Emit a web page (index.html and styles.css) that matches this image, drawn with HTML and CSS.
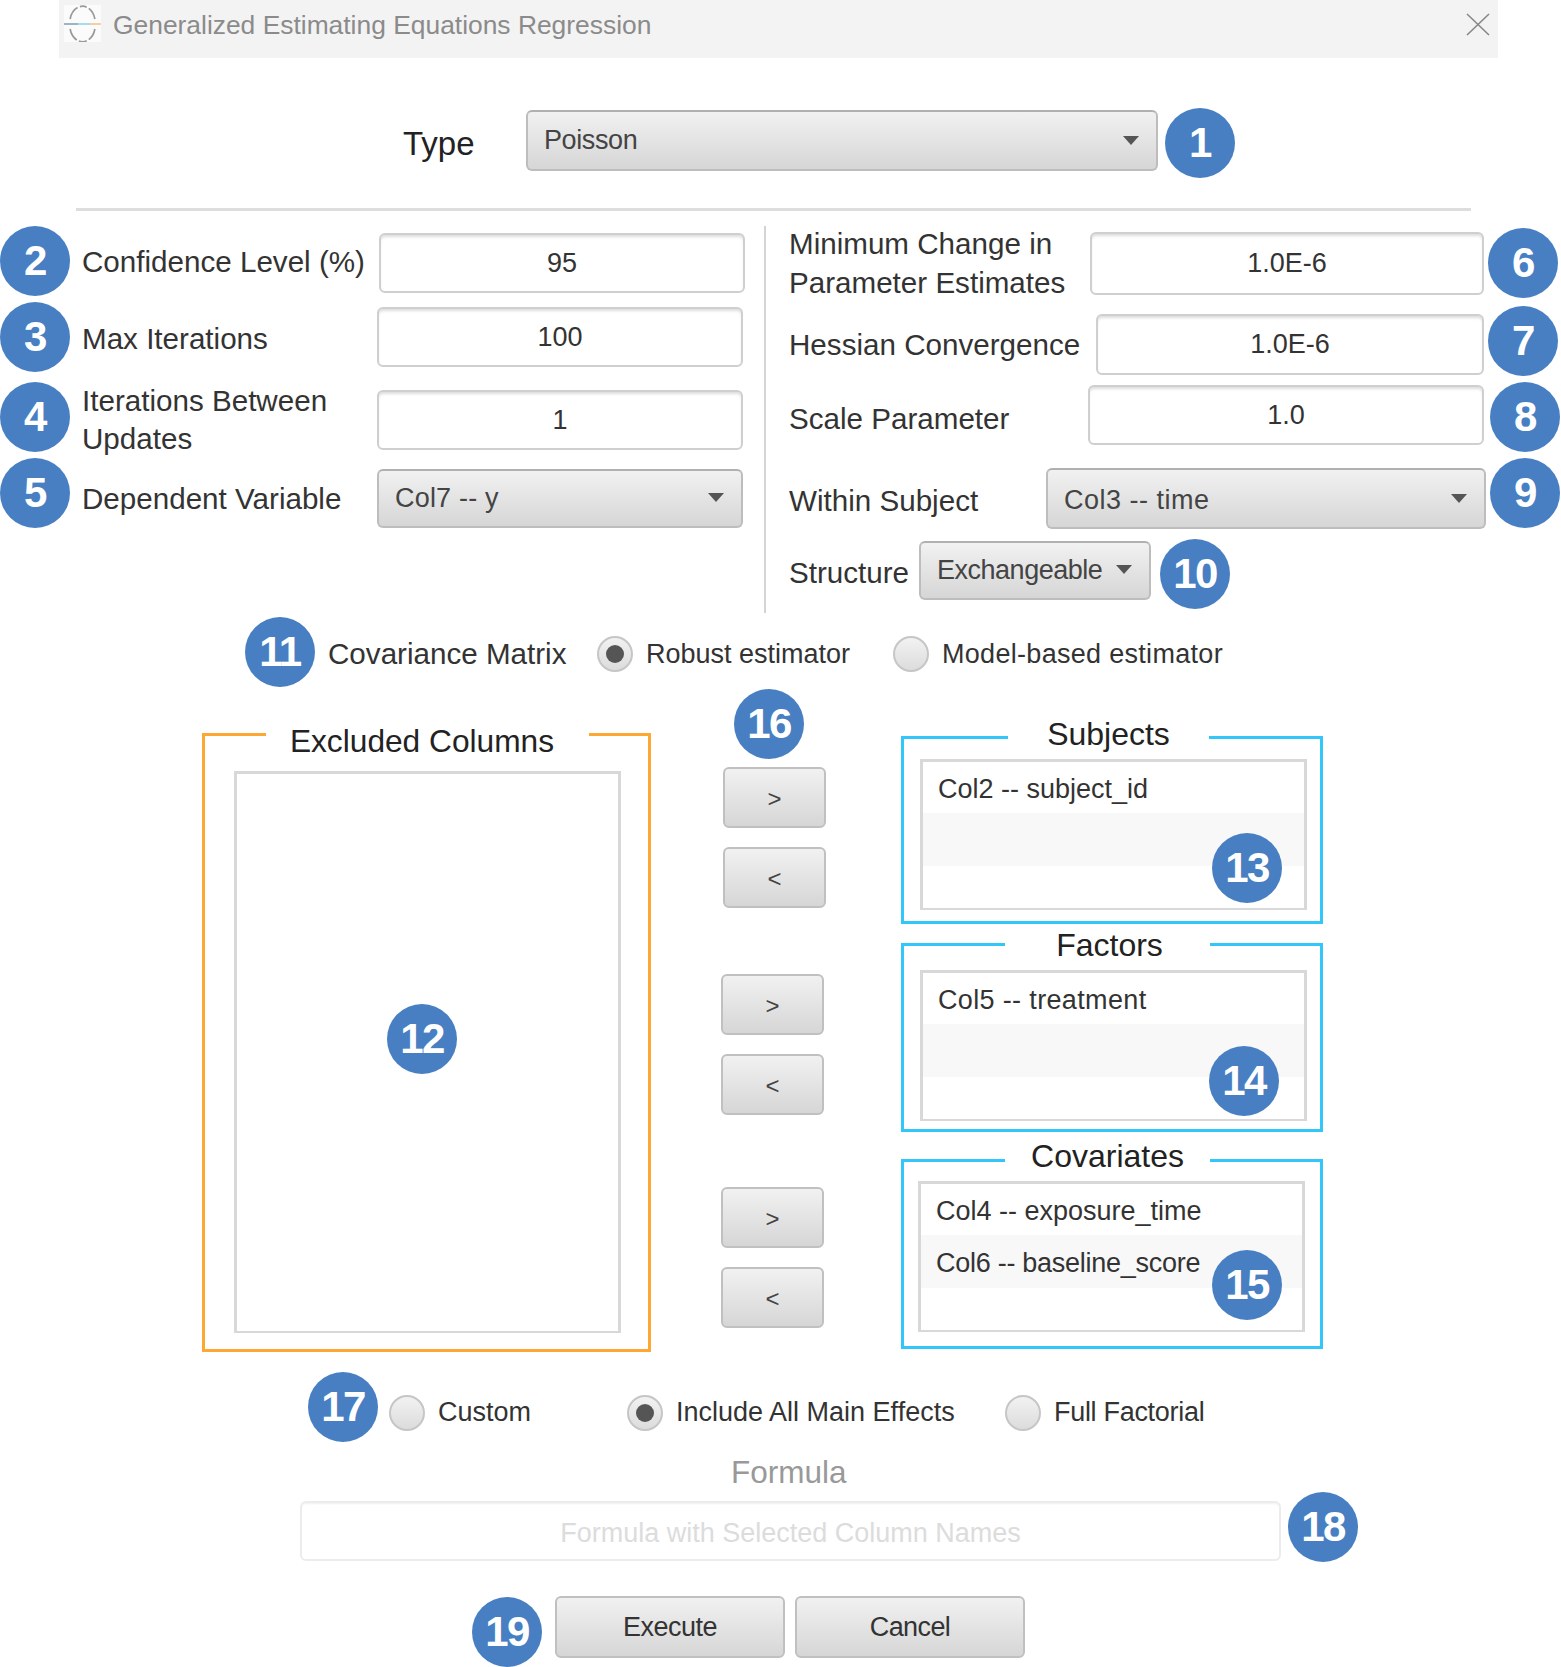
FILE: index.html
```html
<!DOCTYPE html>
<html lang="en">
<head>
    <meta charset="UTF-8">
    <title>Generalized Estimating Equations Regression</title>
    <link rel="stylesheet" href="styles.css">
</head>
<body>
<div class="window">

    <div class="titlebar">
        <svg class="app-icon" viewBox="0 0 37 37">
            <rect width="37" height="37" fill="#fbfbfb"/>
            <path d="M6.1 14 A12.8 17 0 0 1 30.9 14" fill="none" stroke="#999" stroke-width="1.7" stroke-dasharray="14 2.5 7 2.5 30"/>
            <path d="M6.1 24 A12.8 17 0 0 0 30.9 24" fill="none" stroke="#999" stroke-width="1.7" stroke-dasharray="13 2.5 8 2.5 30"/>
            <path d="M0 19 H14" stroke="#9db4c6" stroke-width="2"/>
            <path d="M14 19 H26" stroke="#a6dcef" stroke-width="2"/>
            <path d="M26 19 H37" stroke="#f5cf9f" stroke-width="2"/>
        </svg>
        <span class="title-text">Generalized Estimating Equations Regression</span>
        <svg class="close-icon" viewBox="0 0 24 23">
            <path d="M1 1 L23 22 M23 1 L1 22" stroke="#888" stroke-width="1.6" fill="none"/>
        </svg>
    </div>

    <div class="type-row">
        <span class="type-label">Type</span>
        <div class="select select-type">Poisson</div>
        <span class="badge">1</span>
    </div>

    <div class="rule"></div>

    <div class="main">
        <div class="col-left">
            <div class="row">
                <span class="badge">2</span>
                <span class="label label-conf">Confidence Level (%)</span>
                <div class="field field-conf">95</div>
            </div>
            <div class="row row-max">
                <span class="badge">3</span>
                <span class="label label-max">Max Iterations</span>
                <div class="field">100</div>
            </div>
            <div class="row row-iter">
                <span class="badge">4</span>
                <span class="label label-iter">Iterations Between<br>Updates</span>
                <div class="field field-iter">1</div>
            </div>
            <div class="row row-dep">
                <span class="badge">5</span>
                <span class="label label-dep">Dependent Variable</span>
                <div class="select select-dep">Col7 -- y</div>
            </div>
        </div>

        <div class="divider"></div>

        <div class="col-right">
            <div class="row-r">
                <span class="label-r label-two">Minimum Change in<br>Parameter Estimates</span>
                <div class="field field-min">1.0E-6</div>
                <span class="badge">6</span>
            </div>
            <div class="row-r row-hess">
                <span class="label-r label-hess">Hessian Convergence</span>
                <div class="field field-hess">1.0E-6</div>
                <span class="badge">7</span>
            </div>
            <div class="row-r row-scale">
                <span class="label-r label-scale">Scale Parameter</span>
                <div class="field field-scale">1.0</div>
                <span class="badge badge-far">8</span>
            </div>
            <div class="row-r row-within">
                <span class="label-r label-within">Within Subject</span>
                <div class="select select-within">Col3 -- time</div>
                <span class="badge badge-near">9</span>
            </div>
            <div class="row-r row-struct">
                <span class="label-r label-struct">Structure</span>
                <div class="select select-struct">Exchangeable</div>
                <span class="badge badge-struct">10</span>
            </div>
        </div>
    </div>

    <div class="cov-row">
        <span class="badge">11</span>
        <span class="label cov-label">Covariance Matrix</span>
        <span class="radio radio-on"></span>
        <span class="radio-text radio-text-robust">Robust estimator</span>
        <span class="radio"></span>
        <span class="radio-text radio-text-model">Model-based estimator</span>
    </div>

    <div class="columns">
        <div class="group group-orange">
            <span class="group-title title-excluded">Excluded Columns</span>
            <div class="list list-excluded"></div>
            <span class="badge badge-over badge-12">12</span>
        </div>

        <div class="arrows">
            <span class="badge badge-16">16</span>
            <div class="arrow-pair pair-first">
                <div class="btn btn-arrow">&gt;</div>
                <div class="btn btn-arrow">&lt;</div>
            </div>
            <div class="arrow-pair pair-second">
                <div class="btn btn-arrow">&gt;</div>
                <div class="btn btn-arrow">&lt;</div>
            </div>
            <div class="arrow-pair pair-third">
                <div class="btn btn-arrow">&gt;</div>
                <div class="btn btn-arrow">&lt;</div>
            </div>
        </div>

        <div class="groups">
            <div class="group group-blue group-subjects">
                <span class="group-title title-subjects">Subjects</span>
                <div class="list">
                    <div class="list-item">Col2 -- subject_id</div>
                    <div class="list-item list-item-alt"></div>
                </div>
                <span class="badge badge-over badge-13">13</span>
            </div>
            <div class="group group-blue group-factors">
                <span class="group-title title-factors">Factors</span>
                <div class="list">
                    <div class="list-item item-treatment">Col5 -- treatment</div>
                    <div class="list-item list-item-alt"></div>
                </div>
                <span class="badge badge-over badge-14">14</span>
            </div>
            <div class="group group-blue group-covariates">
                <span class="group-title title-covariates">Covariates</span>
                <div class="list">
                    <div class="list-item">Col4 -- exposure_time</div>
                    <div class="list-item list-item-alt item-baseline">Col6 -- baseline_score</div>
                </div>
                <span class="badge badge-over badge-15">15</span>
            </div>
        </div>
    </div>

    <div class="effects-row">
        <span class="badge">17</span>
        <span class="radio"></span>
        <span class="radio-text effect-custom">Custom</span>
        <span class="radio radio-on"></span>
        <span class="radio-text effect-main">Include All Main Effects</span>
        <span class="radio"></span>
        <span class="radio-text effect-full">Full Factorial</span>
    </div>

    <div class="formula-label">Formula</div>
    <div class="formula-row">
        <div class="field field-formula">Formula with Selected Column Names</div>
        <span class="badge">18</span>
    </div>

    <div class="action-row">
        <span class="badge">19</span>
        <div class="btn btn-action btn-execute">Execute</div>
        <div class="btn btn-action btn-cancel">Cancel</div>
    </div>

</div>
</body>
</html>
```

FILE: styles.css
```css
html, body {
    margin: 0;
    padding: 0;
    background-color: #fff;
}

.window {
    width: 1561px;
    height: 1667px;
    overflow: hidden;
    font-family: "Liberation Sans", Arial, sans-serif;
    color: #333;
}

/* title bar */
.titlebar {
    display: flex;
    align-items: center;
    height: 58px;
    margin: 0 63px 0 59px;
    background-color: #f3f3f3;
}

.app-icon {
    width: 37px;
    height: 37px;
    margin-left: 5px;
    margin-top: -11px;
}

.title-text {
    margin-left: 12px;
    margin-top: -8px;
    font-size: 26.4px;
    color: #8b8b8b;
}

.close-icon {
    width: 24px;
    height: 23px;
    margin-left: auto;
    margin-right: 8px;
    margin-top: -10px;
}

/* badges */
.badge {
    flex: none;
    display: flex;
    align-items: center;
    justify-content: center;
    width: 70px;
    height: 70px;
    border-radius: 50%;
    background-color: #477fc2;
    color: #fff;
    font-size: 42px;
    font-weight: bold;
    letter-spacing: -1.5px;
}

.badge-over {
    position: absolute;
}

.badge-12 {
    left: 182px;
    top: 268px;
}

.badge-13 {
    left: 308px;
    top: 94px;
}

.badge-14 {
    left: 305px;
    top: 100px;
}

.badge-15 {
    left: 308px;
    top: 88px;
}

.badge-16 {
    margin-left: 13px;
}

/* type */
.type-row {
    display: flex;
    align-items: center;
    height: 70px;
    margin-top: 50px;
    margin-left: 403px;
}

.type-label {
    width: 123px;
    margin-top: 2px;
    font-size: 33px;
    color: #222;
}

.select {
    position: relative;
    box-sizing: border-box;
    display: flex;
    align-items: center;
    border: 2px solid #bdbdbd;
    border-top-color: #b0b0b0;
    border-radius: 6px;
    background: linear-gradient(#f1f1f1, #d6d6d6);
    padding-left: 16px;
    font-size: 27px;
    color: #444;
}

.select::after {
    content: "";
    position: absolute;
    right: 17px;
    top: 50%;
    margin-top: -5px;
    border-left: 8px solid transparent;
    border-right: 8px solid transparent;
    border-top: 9px solid #555;
}

.select-type {
    width: 632px;
    height: 61px;
    margin-top: -5px;
    margin-right: 7px;
    letter-spacing: -0.4px;
}

.rule {
    height: 3px;
    margin: 30px 90px 0 76px;
    background-color: #ddd;
}

/* top two columns */
.main {
    display: flex;
    margin-top: 15px;
}

.col-left {
    width: 764px;
}

.divider {
    width: 2px;
    height: 387px;
    background-color: #d4d4d4;
}

.col-right {
    margin-left: 23px;
    padding-top: 2px;
    width: 769px;
}

.row {
    display: flex;
    align-items: center;
    height: 70px;
}

.row-max {
    margin-top: 6px;
}

.row-iter {
    margin-top: 10px;
}

.row-dep {
    margin-top: 6px;
}

.label {
    margin-left: 12px;
    width: 295px;
    font-size: 29.6px;
    line-height: 38.5px;
}

.label-conf {
    width: 297px;
    margin-top: 2px;
}

.label-max {
    margin-top: 4px;
}

.label-iter {
    margin-top: 6px;
}

.label-dep {
    margin-top: 12px;
}

.field {
    box-sizing: border-box;
    display: flex;
    align-items: center;
    justify-content: center;
    width: 366px;
    height: 60px;
    border: 2px solid #cfcfcf;
    border-radius: 6px;
    background: #fff;
    box-shadow: inset 0 3px 3px -1px #ddd;
    font-size: 27px;
    color: #333;
}

.field-conf {
    margin-top: 4px;
}

.field-iter {
    margin-top: 5px;
    padding-top: 2px;
}

.select-dep {
    width: 366px;
    height: 59px;
    margin-top: 10px;
    letter-spacing: 0.2px;
}

.row-r {
    display: flex;
    align-items: center;
    height: 70px;
}

.row-hess {
    margin-top: 8px;
}

.row-scale {
    margin-top: 6px;
}

.row-within {
    margin-top: 6px;
}

.row-struct {
    margin-top: 11px;
}

.label-r {
    font-size: 29.6px;
    line-height: 38.5px;
    white-space: nowrap;
}

.label-two {
    margin-top: 1px;
}

.label-hess {
    margin-top: 8px;
}

.label-scale {
    margin-top: 4px;
}

.label-within {
    margin-top: 16px;
}

.label-struct {
    margin-top: -2px;
}

.field-min {
    width: 394px;
    height: 63px;
    margin-left: auto;
    margin-right: 4px;
}

.field-hess {
    width: 388px;
    height: 61px;
    margin-left: auto;
    margin-right: 4px;
    margin-top: 6px;
}

.field-scale {
    width: 396px;
    height: 60px;
    margin-left: auto;
    margin-right: 6px;
    margin-top: -4px;
}

.select-within {
    width: 440px;
    height: 61px;
    margin-left: auto;
    margin-right: 4px;
    margin-top: 11px;
    padding-top: 3px;
    letter-spacing: 0.5px;
}

.badge-far,
.badge-near {
    margin-right: -2px;
}

.select-struct {
    width: 232px;
    height: 59px;
    margin-left: 10px;
    margin-right: 9px;
    margin-top: -8px;
    padding-right: 50px;
    padding-top: 1px;
    white-space: nowrap;
    letter-spacing: -0.5px;
}

/* radios */
.cov-row {
    display: flex;
    align-items: center;
    height: 70px;
    margin-top: 4px;
    margin-left: 245px;
}

.cov-label {
    margin-left: 13px;
    margin-top: 4px;
    width: 269px;
    white-space: nowrap;
}

.radio {
    position: relative;
    flex: none;
    box-sizing: border-box;
    width: 36px;
    height: 36px;
    border: 2px solid #c6c6c6;
    border-radius: 50%;
    background: linear-gradient(#f2f2f2, #dcdcdc);
    margin-top: 4px;
}

.radio-on::after {
    content: "";
    position: absolute;
    left: 7px;
    top: 7px;
    width: 18px;
    height: 18px;
    border-radius: 50%;
    background-color: #555;
}

.radio-text {
    margin-left: 13px;
    font-size: 27px;
    white-space: nowrap;
    color: #333;
    margin-top: 4px;
}

.radio-text-robust {
    width: 247px;
}

.radio-text-model {
    letter-spacing: 0.3px;
}

/* list columns */
.columns {
    display: flex;
    margin-top: 2px;
    padding-left: 202px;
}

.group {
    position: relative;
    box-sizing: border-box;
    border-style: solid;
    border-width: 3px;
}

.group-orange {
    width: 449px;
    height: 619px;
    margin-top: 44px;
    border-color: #ffa733;
    padding: 35px 0 0 29px;
}

.group-blue {
    width: 422px;
    border-color: #33c6fb;
    padding: 20px 0 0 16px;
}

.group-title {
    position: absolute;
    box-sizing: border-box;
    background-color: #fff;
    text-align: center;
    font-size: 32px;
    line-height: 40px;
    color: #222;
    white-space: nowrap;
}

.title-excluded {
    left: 61px;
    top: -15px;
    width: 323px;
    padding-right: 11px;
    font-size: 31.7px;
}

.title-subjects {
    left: 104px;
    top: -25px;
    width: 201px;
}

.title-factors {
    left: 101px;
    top: -21px;
    width: 205px;
    padding-left: 4px;
}

.title-covariates {
    left: 101px;
    top: -26px;
    width: 205px;
}

.list {
    box-sizing: border-box;
    width: 387px;
    height: 151px;
    border: 3px solid #d8d8d8;
    border-bottom-width: 2px;
    background-color: #fff;
}

.list-excluded {
    width: 387px;
    height: 562px;
}

.list-item {
    box-sizing: border-box;
    display: flex;
    align-items: center;
    height: 51px;
    padding-left: 15px;
    padding-top: 4px;
    font-size: 27px;
    color: #333;
}

.list-item-alt {
    height: 53px;
    background-color: #f8f8f8;
}

.item-treatment {
    letter-spacing: 0.35px;
}

.item-baseline {
    letter-spacing: -0.27px;
}

.groups {
    margin-left: 74px;
    margin-top: 47px;
}

.group-subjects {
    height: 188px;
}

.group-factors {
    height: 189px;
    margin-top: 19px;
    padding-top: 24px;
}

.group-covariates {
    height: 190px;
    margin-top: 27px;
    padding-top: 19px;
    padding-left: 14px;
}

/* arrow buttons */
.arrows {
    width: 106px;
    margin-left: 70px;
}

.arrow-pair {
    display: flex;
    flex-direction: column;
    gap: 19px;
}

.pair-first {
    margin-top: 8px;
    margin-left: 2px;
}

.pair-second {
    margin-top: 66px;
}

.pair-third {
    margin-top: 72px;
}

.btn {
    box-sizing: border-box;
    display: flex;
    align-items: center;
    justify-content: center;
    border: 2px solid #c0c0c0;
    border-radius: 6px;
    background: linear-gradient(#f1f1f1, #d6d6d6);
    color: #444;
}

.btn-arrow {
    width: 103px;
    height: 61px;
    padding-top: 2px;
    font-size: 24px;
}

/* bottom rows */
.effects-row {
    display: flex;
    align-items: center;
    height: 70px;
    margin-top: 20px;
    margin-left: 308px;
}

.effects-row .radio,
.effects-row .radio-text {
    margin-top: 11px;
}

.effects-row .radio {
    margin-left: 11px;
}

.effect-custom {
    width: 189px;
}

.effects-row .effect-custom + .radio {
    margin-left: 0;
}

.effect-main {
    width: 329px;
}

.effects-row .effect-main + .radio {
    margin-left: 0;
}

.effect-full {
    letter-spacing: -0.3px;
}

.formula-label {
    margin-top: 11px;
    height: 39px;
    padding-left: 731px;
    font-size: 31.5px;
    line-height: 39px;
    color: #999;
}

.formula-row {
    display: flex;
    align-items: flex-start;
    margin-left: 300px;
}

.field-formula {
    width: 981px;
    height: 60px;
    margin-top: 9px;
    margin-right: 7px;
    padding-top: 4px;
    border-color: #ececec;
    box-shadow: inset 0 2px 2px -1px #f0f0f0;
    color: #dcdcdc;
}

.action-row {
    display: flex;
    align-items: flex-start;
    margin-top: 35px;
    margin-left: 472px;
}

.btn-action {
    width: 230px;
    height: 62px;
    margin-top: -1px;
    margin-left: 10px;
    font-size: 27px;
    color: #333;
}

.action-row .badge + .btn-action {
    margin-left: 13px;
}

.btn-execute {
    letter-spacing: -0.5px;
}

.btn-cancel {
    letter-spacing: -0.6px;
}
```
